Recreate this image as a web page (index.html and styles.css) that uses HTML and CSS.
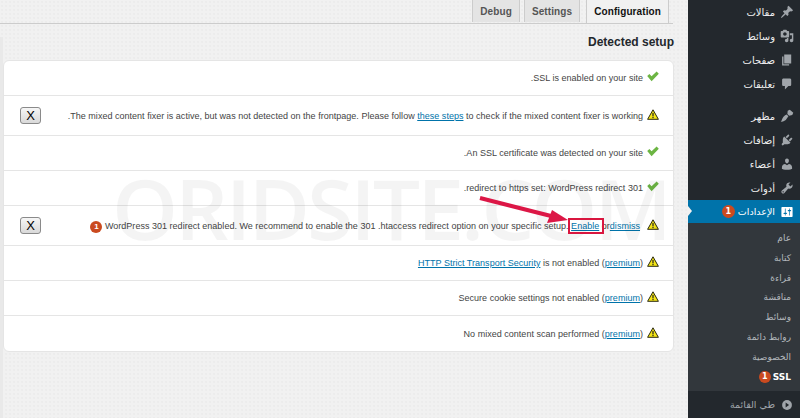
FILE: index.html
```html
<!DOCTYPE html>
<html lang="en">
<head>
<meta charset="utf-8">
<title>SSL settings</title>
<link rel="stylesheet" href="styles.css">
</head>
<body>
<svg class="defs" width="0" height="0" aria-hidden="true">
  <symbol id="ok" viewBox="0 0 12 10"><path d="M0.2 4.6 L2.4 2.6 L4.6 4.8 L9.6 0 L11.8 2.2 L4.6 9.8 Z" fill="#6cb543"/></symbol>
  <symbol id="warn" viewBox="0 0 12 11"><path d="M6 0.8 L11.4 10.3 H0.6 Z" fill="#f5e616" stroke="#2b2a10" stroke-width="1" stroke-linejoin="round"/><rect x="5.4" y="3.8" width="1.2" height="3.6" fill="#222"/><rect x="5.4" y="8" width="1.2" height="1.2" fill="#222"/></symbol>
</svg>
<div class="page">
  <main class="main">
    <nav class="tabs">
      <a class="tab">Debug</a>
      <a class="tab">Settings</a>
      <a class="tab active">Configuration</a>
    </nav>
    <div class="content">
      <h2 class="title">Detected setup</h2>
      <div class="card">
        <div class="row h35"><svg class="ico"><use href="#ok"/></svg><span class="msg">SSL is enabled on your site.</span></div>
        <div class="row h40"><svg class="ico"><use href="#warn"/></svg><span class="msg">The mixed content fixer is active, but was not detected on the frontpage. Please follow <a href="#">these steps</a> to check if the mixed content fixer is working.</span><button class="x">X</button></div>
        <div class="row h35"><svg class="ico"><use href="#ok"/></svg><span class="msg">An SSL certificate was detected on your site.</span></div>
        <div class="row h35"><svg class="ico"><use href="#ok"/></svg><span class="msg">301 redirect to https set: WordPress redirect.</span></div>
        <div class="row h40"><svg class="ico"><use href="#warn"/></svg><span class="msg inset">WordPress 301 redirect enabled. We recommend to enable the 301 .htaccess redirect option on your specific setup. <a href="#">Enable</a> or<a href="#">dismiss</a> <span class="badge">1</span></span><button class="x">X</button></div>
        <div class="row h35"><svg class="ico"><use href="#warn"/></svg><span class="msg"><span class="ltr"><a href="#">HTTP Strict Transport Security</a> is not enabled (<a href="#">premium</a>)</span></span></div>
        <div class="row h35"><svg class="ico"><use href="#warn"/></svg><span class="msg"><span class="ltr">Secure cookie settings not enabled (<a href="#">premium</a>)</span></span></div>
        <div class="row h35"><svg class="ico"><use href="#warn"/></svg><span class="msg"><span class="ltr">No mixed content scan performed (<a href="#">premium</a>)</span></span></div>
      </div>
    </div>
    <div class="watermark">ORIDSITE.COM</div>
    <svg class="arrow" width="120" height="50" viewBox="0 0 120 50"><path d="M1 2 L72 20" stroke="#dc1746" stroke-width="4" fill="none"/><path d="M89 24 L68 27 L73 14 Z" fill="#dc1746"/></svg>
    <div class="redbox"></div>
  </main>
  <aside class="side">
    <ul class="menu top">
      <li class="mi"><svg class="mico" viewBox="0 0 20 20"><path d="M10.44 3.02l1.82-1.82 6.36 6.35-1.83 1.82c-1.05-.68-2.48-.57-3.41.36l-.75.75c-.92.93-1.04 2.35-.35 3.41l-1.83 1.82-2.41-2.41-2.8 2.79c-.42.42-3.38 2.71-3.8 2.29s1.86-3.39 2.28-3.81l2.79-2.79L4.1 9.36l1.83-1.82c1.05.69 2.48.57 3.4-.36l.75-.75c.93-.92 1.05-2.35.36-3.41z"/></svg><span>مقالات</span></li>
      <li class="mi"><svg class="mico" viewBox="0 0 20 20"><path d="M13 11V4c0-.55-.45-1-1-1h-1.67L9 1H5L3.67 3H2c-.55 0-1 .45-1 1v7c0 .55.45 1 1 1h10c.55 0 1-.45 1-1zM7 4.5c1.38 0 2.5 1.12 2.5 2.5S8.38 9.5 7 9.5 4.5 8.38 4.5 7 5.62 4.5 7 4.5zM14 6h5v10.5c0 1.38-1.12 2.5-2.5 2.5S14 17.88 14 16.5s1.12-2.5 2.5-2.5c.17 0 .34.02.5.05V9h-3V6zm-4 8.05V13h2v3.5c0 1.38-1.12 2.5-2.5 2.5S7 17.88 7 16.5 8.12 14 9.5 14c.17 0 .34.02.5.05z"/></svg><span>وسائط</span></li>
      <li class="mi"><svg class="mico" viewBox="0 0 20 20"><path d="M6 15V2h10v13H6zm-1 1h8v2H3V5h2v11z"/></svg><span>صفحات</span></li>
      <li class="mi"><svg class="mico" viewBox="0 0 20 20"><path d="M5 2h9c1.1 0 2 .9 2 2v7c0 1.1-.9 2-2 2h-2l-5 5v-5H5c-1.1 0-2-.9-2-2V4c0-1.1.9-2 2-2z"/></svg><span>تعليقات</span></li>
    </ul>
    <ul class="menu second">
      <li class="mi"><svg class="mico" viewBox="0 0 20 20"><path d="M11 2.5 L14 1 L19 5.5 L17.5 8.5 L13 9.5 L10.5 7 Z M9.5 8 L12 10.5 L9.5 14 C8 17 4 18.5 1 18 C3 16.5 3 13 5 11 C6.5 9.5 8 8.8 9.5 8 Z"/></svg><span>مظهر</span></li>
      <li class="mi"><svg class="mico" viewBox="0 0 20 20"><path d="M13.11 4.36L9.87 7.6 8 5.73l3.24-3.24c.35-.34 1.05-.2 1.56.32.52.51.66 1.21.31 1.55zm-8 1.77l.91-1.12 9.01 9.01-1.19.84c-.71.71-2.63 1.16-3.82 1.16H6.14L4.9 17.26c-.59.59-1.54.59-2.12 0-.59-.58-.59-1.53 0-2.12l1.24-1.24v-3.88c0-1.13.4-3.19 1.09-3.89zm7.26 3.97l3.24-3.24c.34-.35 1.04-.21 1.55.31.52.51.66 1.21.31 1.55l-3.24 3.25z"/></svg><span>إضافات</span></li>
      <li class="mi"><svg class="mico" viewBox="0 0 20 20"><path d="M10 9.25c-2.27 0-2.73-3.44-2.73-3.44C7 4.02 7.82 2 9.97 2c2.16 0 2.98 2.02 2.71 3.81 0 0-.41 3.44-2.68 3.44zm0 2.57L12.72 10c2.39 0 4.52 2.33 4.52 4.53v2.49s-3.65 1.13-7.24 1.13c-3.65 0-7.24-1.13-7.24-1.13v-2.49c0-2.25 1.94-4.48 4.47-4.48z"/></svg><span>أعضاء</span></li>
      <li class="mi"><svg class="mico" viewBox="0 0 20 20"><path d="M16.68 9.77c-1.34 1.34-3.3 1.67-4.95.99l-5.41 6.52c-.99.99-2.59.99-3.58 0s-.99-2.59 0-3.57l6.52-5.42c-.68-1.65-.35-3.61.99-4.95 1.28-1.28 3.12-1.62 4.72-1.06l-2.89 2.89 2.82 2.82 2.86-2.87c.53 1.58.18 3.39-1.08 4.65zM3.81 16.21c.4.39 1.04.39 1.43 0 .4-.4.4-1.04 0-1.43-.39-.4-1.03-.4-1.43 0-.39.39-.39 1.03 0 1.43z"/></svg><span>أدوات</span></li>
    </ul>
    <div class="mi current"><svg class="mico" viewBox="0 0 20 20"><path d="M18 16V4c0-.55-.45-1-1-1H3c-.55 0-1 .45-1 1v12c0 .55.45 1 1 1h14c.55 0 1-.45 1-1zM8 11h1c.55 0 1 .45 1 1s-.45 1-1 1H8v1.5c0 .28-.22.5-.5.5s-.5-.22-.5-.5V13H6c-.55 0-1-.45-1-1s.45-1 1-1h1V5.5c0-.28.22-.5.5-.5s.5.22.5.5V11zm5-2h-1c-.55 0-1-.45-1-1s.45-1 1-1h1V5.5c0-.28.22-.5.5-.5s.5.22.5.5V7h1c.55 0 1 .45 1 1s-.45 1-1 1h-1v5.5c0 .28-.22.5-.5.5s-.5-.22-.5-.5V9z"/></svg><span>الإعدادات</span><span class="badge">1</span></div>
    <ul class="sub">
      <li>عام</li>
      <li>كتابة</li>
      <li>قراءة</li>
      <li>مناقشة</li>
      <li>وسائط</li>
      <li>روابط دائمة</li>
      <li>الخصوصية</li>
      <li class="on"><span>SSL</span><span class="badge">1</span></li>
    </ul>
    <div class="mi collapse"><svg class="mico" viewBox="0 0 20 20"><circle cx="10" cy="10" r="7"/><path d="M8 6.5 L13 10 L8 13.5 Z" fill="#23282d"/></svg><span>طي القائمة</span></div>
  </aside>
</div>
</body>
</html>
```
FILE: styles.css
```css
* { box-sizing: border-box; }
html, body { margin: 0; padding: 0; height: 100%; overflow: hidden; }
body { background: #f1f1f1; font-family: "Liberation Sans", "DejaVu Sans", sans-serif; }
ul { list-style: none; margin: 0; padding: 0; }
.defs { position: absolute; }
.page { display: flex; height: 418px; width: 800px; }

.main { position: relative; flex: 0 0 688px; display: flex; flex-direction: column; background: #f1f1f1 radial-gradient(#ececec .7px, transparent .8px) 0 0 / 4px 4px; overflow: hidden; }
.tabs { display: flex; flex: none; justify-content: flex-end; gap: 4px; height: 24px; padding-right: 4px; border-bottom: 1px solid #ccc; margin-right: 15px; }
.tab { height: 23px; margin-top: -1px; padding: 6px 7px 0; font-size: 10px; letter-spacing: .1px; font-weight: bold; color: #555; background: #e4e4e4; border: 1px solid #ccc; border-bottom: 0; }
.active { height: 24px; color: #111; background: #f1f1f1; margin-left: 2px; }

.content { flex: 1; margin-top: 13px; padding-right: 14px; border-left: 3px solid #e9e9e9; }
.title { margin: 0; height: 23px; text-align: right; direction: rtl; font-size: 12px; line-height: 10px; font-weight: bold; color: #23282d; }
.card { background: #fff; border: 1px solid #e5e5e5; border-radius: 6px; width: 671px; }
.row { display: flex; align-items: center; direction: rtl; padding: 0 14px 0 16px; border-bottom: 1px solid #e5e5e5; font-size: 9px; letter-spacing: .02px; color: #444; }
.row:last-child { border-bottom: 0; }
.h35 { height: 35px; }
.h40 { height: 40px; }
.ico { width: 12px; height: 11px; flex: none; margin-left: 4px; margin-top: -3px; }
.msg { flex: 1; min-width: 0; line-height: 14px; white-space: nowrap; }
.inset { margin-right: 3px; }
.ltr { direction: ltr; unicode-bidi: embed; }
.msg a { color: #0073aa; text-decoration: underline; }
.x { width: 21px; height: 17px; padding: 0; flex: none; font-size: 13px; line-height: 15px; color: #000; background: linear-gradient(#f6f6f6, #d9d9d9); border: 1px solid #8a8a8a; border-radius: 3px; }

.badge { display: inline-block; width: 12px; height: 12px; border-radius: 50%; background: #ca4a1f; color: #fff; font-size: 8px; font-weight: bold; line-height: 12px; text-align: center; vertical-align: 0; }

.watermark { position: absolute; left: 112px; top: 166px; font-family: "Open Sans", sans-serif; font-size: 84px; line-height: 84px; font-weight: 600; letter-spacing: -3px; color: rgba(0, 0, 0, .045); pointer-events: none; white-space: nowrap; }
.arrow { position: absolute; left: 479px; top: 196px; pointer-events: none; }
.redbox { position: absolute; left: 568px; top: 218px; width: 36px; height: 16px; border: 2px solid #d9163f; pointer-events: none; }

.side { flex: 0 0 112px; background: #23282d; direction: rtl; color: #eee; font-family: "DejaVu Sans", sans-serif; font-size: 10px; display: flex; flex-direction: column; }
.top { padding-bottom: 8px; }
.mi { display: flex; align-items: center; height: 24px; gap: 5px; padding-right: 6px; }
.mico { width: 14px; height: 14px; fill: #a0a5aa; flex: none; }
.current { height: 23px; background: #0073aa; color: #fff; position: relative; font-size: 9.5px; gap: 5px; }
.current .mico { fill: #fff; }
.current .badge { width: 13px; height: 13px; line-height: 13px; margin-right: -2px; }
.current::before { content: ""; position: absolute; left: 0; top: 6px; border: 5px solid transparent; border-left: 4px solid #f1f1f1; border-right: 0; }
.sub { background: #32373c; padding: 6px 0 4px; height: 168px; font-size: 9px; color: #b4b9be; }
.sub li { height: 19.8px; line-height: 19.8px; padding-right: 9px; display: flex; gap: 2px; align-items: center; }
.sub .on { color: #fff; font-weight: bold; font-size: 9px; gap: 2px; }
.collapse { height: 27px; color: #a0a5aa; font-size: 9.5px; }
```
